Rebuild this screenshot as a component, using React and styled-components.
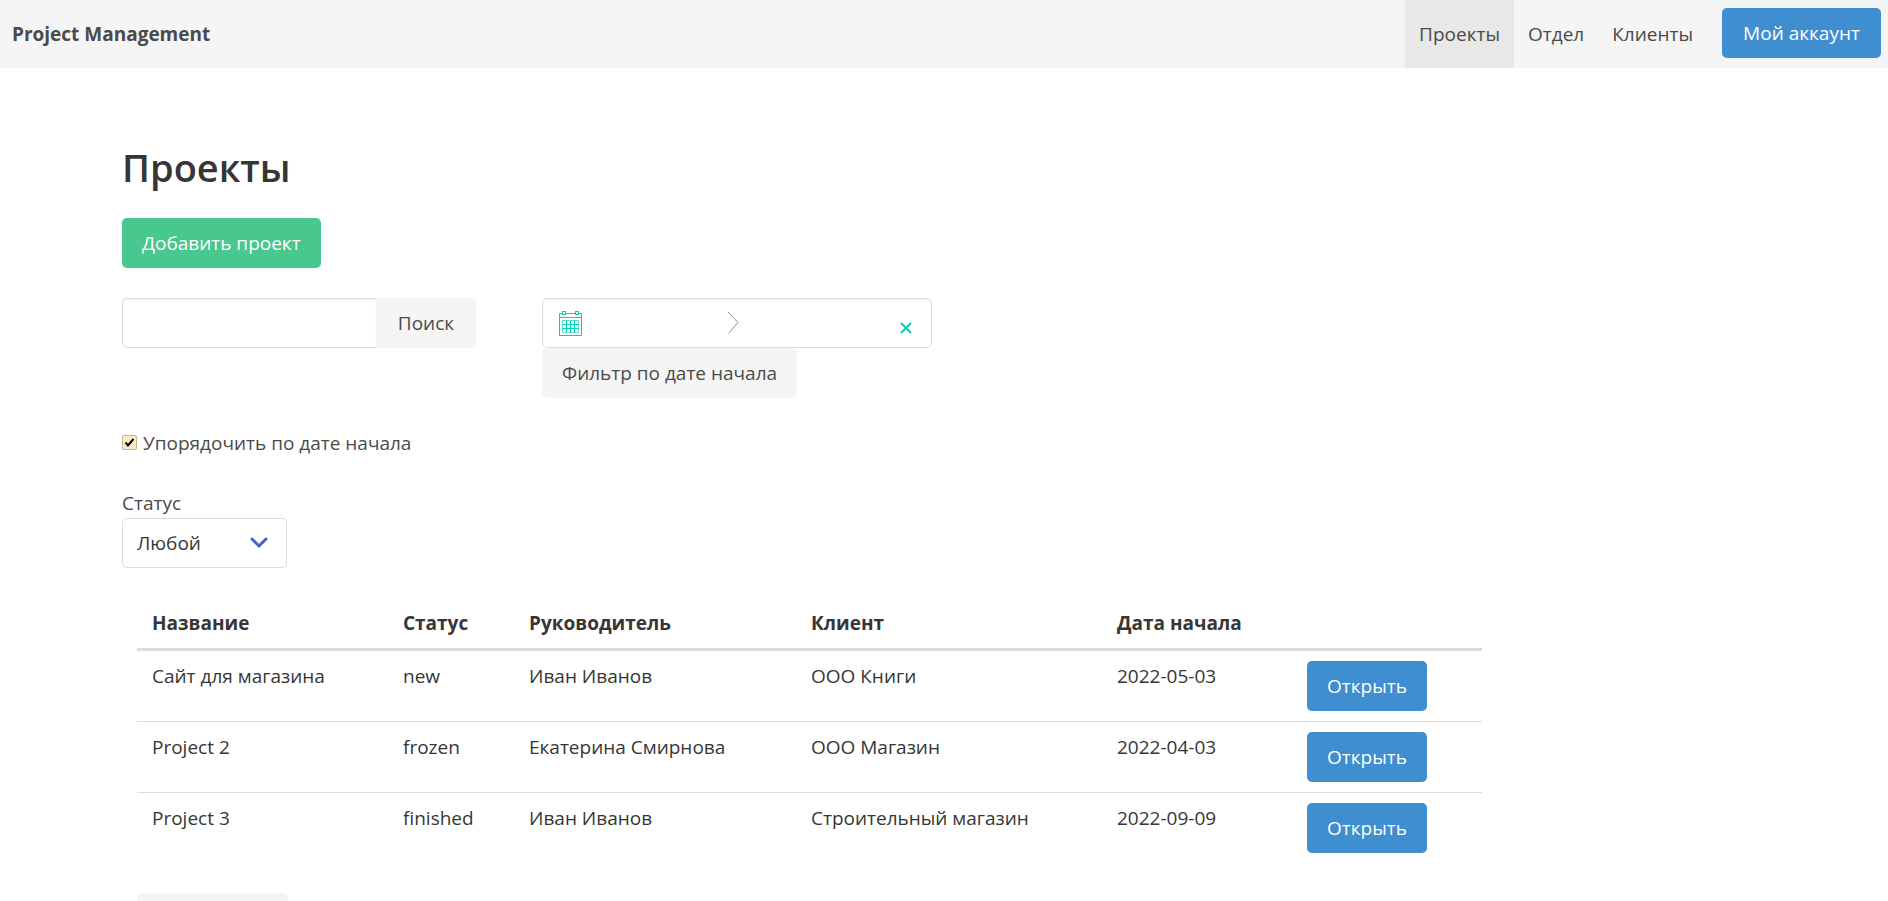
import React from "react";
import styled, { createGlobalStyle } from "styled-components";

const Global = createGlobalStyle`
  *, *::before, *::after { box-sizing: border-box; }
  body {
    margin: 0;
    background: #fff;
    color: #4a4a4a;
    font-family: "Segoe UI", "Open Sans", "Noto Sans", sans-serif;
    font-size: 19px;
    line-height: 30px;
  }
  button, input, select { font: inherit; color: inherit; margin: 0; }
`;

const Navbar = styled.nav`
  display: flex;
  align-items: stretch;
  justify-content: space-between;
  min-height: 68px;
  background: #f5f5f5;
`;

const Brand = styled.a`
  display: flex;
  align-items: center;
  padding: 0 12px;
  color: #4a4a4a;
  font-weight: 700;
  text-decoration: none;
`;

const NavMenu = styled.div`
  display: flex;
  align-items: stretch;
`;

const NavLink = styled.a`
  display: flex;
  align-items: center;
  padding: 0 14px;
  color: #4a4a4a;
  text-decoration: none;
  background: ${(p) => (p.$active ? "#e8e8e8" : "transparent")};
`;

const NavEnd = styled.div`
  display: flex;
  align-items: center;
  padding: 0 7px 2px 15px;
`;

const tones = {
  info: { bg: "#3e8ed0", fg: "#fff" },
  success: { bg: "#48c78e", fg: "#fff" },
  light: { bg: "#f5f5f5", fg: "#4a4a4a" },
};

const Button = styled.button`
  flex: none;
  height: 50px;
  min-width: ${(p) => p.$min || 100}px;
  padding: 0 20px;
  border: 0;
  border-radius: ${(p) => (p.$joined ? "0 5px 5px 0" : "5px")};
  background: ${(p) => tones[p.$tone].bg};
  color: ${(p) => tones[p.$tone].fg};
  white-space: nowrap;
  cursor: pointer;
`;

const Main = styled.main`
  padding: 77px 116px 30px 122px;
`;

const Title = styled.h1`
  margin: 0 0 28px;
  color: #363636;
  font-size: 38px;
  font-weight: 600;
  line-height: 45px;
`;

const Filters = styled.div`
  display: flex;
  flex-wrap: wrap;
  align-items: flex-start;
  gap: 66px;
  margin-top: 30px;
`;

const SearchForm = styled.form`
  display: flex;
  width: 354px;
`;

const SearchInput = styled.input`
  flex: 1;
  min-width: 0;
  height: 50px;
  padding: 0 15px;
  border: 1px solid #dbdbdb;
  border-right: 0;
  border-radius: 5px 0 0 5px;
  background: #fff;
  box-shadow: inset 0 1px 2px rgba(10, 10, 10, 0.05);
`;

const DateForm = styled.form`
  width: 390px;
`;

const DateRange = styled.div`
  display: flex;
  align-items: center;
  height: 50px;
  padding: 0 19px 0 15px;
  border: 1px solid #dbdbdb;
  border-radius: 5px;
  box-shadow: inset 0 1px 2px rgba(10, 10, 10, 0.05);
`;

const DateInput = styled.input`
  flex: none;
  width: 144px;
  height: 30px;
  padding: 0 10px;
  border: 0;
  background: transparent;
`;

const ClearButton = styled.button`
  display: flex;
  margin-left: auto;
  padding: 10px 0 0;
  border: 0;
  background: none;
  cursor: pointer;
`;

const CheckLabel = styled.label`
  display: flex;
  align-items: center;
  gap: 6px;
  width: max-content;
  margin-top: 30px;
`;

const CheckBox = styled.span`
  position: relative;
  display: flex;
  padding-bottom: 2px;

  svg {
    position: absolute;
    top: 0;
    left: 0;
    pointer-events: none;
  }
  input:not(:checked) + svg { display: none; }
`;

const CheckInput = styled.input`
  appearance: none;
  width: 15px;
  height: 15px;
  border: 1px solid #c4b48f;
  border-radius: 2px;
  background: #fdebc8;
`;

const StatusField = styled.div`
  display: flex;
  flex-direction: column;
  align-items: flex-start;
  margin-top: 30px;
`;

const SelectWrap = styled.div`
  position: relative;
  width: 165px;

  svg {
    position: absolute;
    top: 19px;
    right: 19px;
    pointer-events: none;
  }
`;

const Select = styled.select`
  appearance: none;
  width: 100%;
  height: 50px;
  padding: 0 50px 0 14px;
  border: 1px solid #dbdbdb;
  border-radius: 5px;
  background: #fff;
  color: #363636;
`;

const Results = styled.section`
  width: calc(100% * 10 / 12);
  padding: 30px 15px 0;
`;

const Table = styled.table`
  width: 100%;
  margin-bottom: 30px;
  border-collapse: collapse;
  table-layout: fixed;
  color: #363636;
`;

const Col = styled.col`
  width: ${(p) => p.$w}px;
`;

const Th = styled.th`
  padding: 10px 15px;
  border-bottom: 3px solid #dbdbdb;
  font-weight: 700;
  text-align: left;
`;

const Td = styled.td`
  padding: 10px 15px;
  vertical-align: top;

  tr:not(:last-child) > & { border-bottom: 1px solid #dbdbdb; }

  button { display: block; }
`;

const CalendarIcon = () => (
  <svg width="25" height="28" viewBox="0 0 25 28" fill="none" stroke="#00d1b2" aria-hidden="true">
    <g transform="translate(0 2)">
      <path d="M4 2.5H1.5V24.5H23.5V2.5H21M7 2.5H17M1 6.500H24" />
      <rect x="4.500" y="0.500" width="3" height="3" />
      <rect x="17.500" y="0.500" width="3" height="3" />
      <path d="M4.500 9.500H20.500V21.500H4.500Z" strokeOpacity="0.6" />
      <path d="M4.500 13.500H20.500M4.500 17.500H20.500M8.500 9.500V21.500M12.500 9.500V21.500M16.500 9.500V21.500" />
    </g>
  </svg>
);

const columns = [
  ["Название", 251],
  ["Статус", 126],
  ["Руководитель", 282],
  ["Клиент", 306],
  ["Дата начала", 190],
  ["", 190],
];

const projects = [
  ["Сайт для магазина", "new", "Иван Иванов", "ООО Книги", "2022-05-03"],
  ["Project 2", "frozen", "Екатерина Смирнова", "ООО Магазин", "2022-04-03"],
  ["Project 3", "finished", "Иван Иванов", "Строительный магазин", "2022-09-09"],
];

export default function App() {
  return (
    <>
      <Global />
      <Navbar>
        <Brand href="#">Project Management</Brand>
        <NavMenu>
          <NavLink href="#projects" $active>Проекты</NavLink>
          <NavLink href="#department">Отдел</NavLink>
          <NavLink href="#clients">Клиенты</NavLink>
          <NavEnd>
            <Button $tone="info" $min={159} type="button">Мой аккаунт</Button>
          </NavEnd>
        </NavMenu>
      </Navbar>
      <Main>
        <Title>Проекты</Title>
        <Button $tone="success" type="button">Добавить проект</Button>
        <Filters>
          <SearchForm onSubmit={(e) => e.preventDefault()}>
            <SearchInput type="text" aria-label="Поиск" />
            <Button $tone="light" $joined type="submit">Поиск</Button>
          </SearchForm>
          <DateForm onSubmit={(e) => e.preventDefault()}>
            <DateRange>
              <CalendarIcon />
              <DateInput type="text" aria-label="Дата от" />
              <svg width="12" height="24" viewBox="0 0 12 24" fill="none" stroke="#8e8fa6" aria-hidden="true">
                <path d="M1 1L11 11.500L1.500 22.500" />
              </svg>
              <DateInput type="text" aria-label="Дата до" />
              <ClearButton type="button" aria-label="Очистить">
                <svg width="12" height="12" viewBox="0 0 12 12" stroke="#00d1b2" strokeWidth="2" aria-hidden="true">
                  <path d="M1 1L11 11M11 1L1 11" />
                </svg>
              </ClearButton>
            </DateRange>
            <Button $tone="light" type="submit">Фильтр по дате начала</Button>
          </DateForm>
        </Filters>
        <CheckLabel>
          <CheckBox>
            <CheckInput type="checkbox" defaultChecked />
            <svg width="15" height="15" viewBox="0 0 15 15" fill="none" stroke="#000" strokeWidth="2" aria-hidden="true">
              <path d="M3.500 7.500L6 10.500L11.500 4" />
            </svg>
          </CheckBox>
          Упорядочить по дате начала
        </CheckLabel>
        <StatusField>
          <label htmlFor="status">Статус</label>
          <SelectWrap>
            <Select id="status" defaultValue="any">
              <option value="any">Любой</option>
              <option value="new">new</option>
              <option value="frozen">frozen</option>
              <option value="finished">finished</option>
            </Select>
            <svg width="18" height="12" viewBox="0 0 18 12" fill="none" stroke="#485fc7" strokeWidth="3" strokeLinecap="round" aria-hidden="true">
              <path d="M2 2L9 9L16 2" />
            </svg>
          </SelectWrap>
        </StatusField>
        <Results>
          <Table>
            <colgroup>
              {columns.map(([name, w]) => <Col key={name} $w={w} />)}
            </colgroup>
            <thead>
              <tr>{columns.map(([name]) => <Th key={name}>{name}</Th>)}</tr>
            </thead>
            <tbody>
              {projects.map((row) => (
                <tr key={row[0]}>
                  {row.map((cell) => <Td key={cell}>{cell}</Td>)}
                  <Td><Button $tone="info" type="button">Открыть</Button></Td>
                </tr>
              ))}
            </tbody>
          </Table>
          <Button $tone="light" $min={151} type="button" aria-label="Назад" />
        </Results>
      </Main>
    </>
  );
}
